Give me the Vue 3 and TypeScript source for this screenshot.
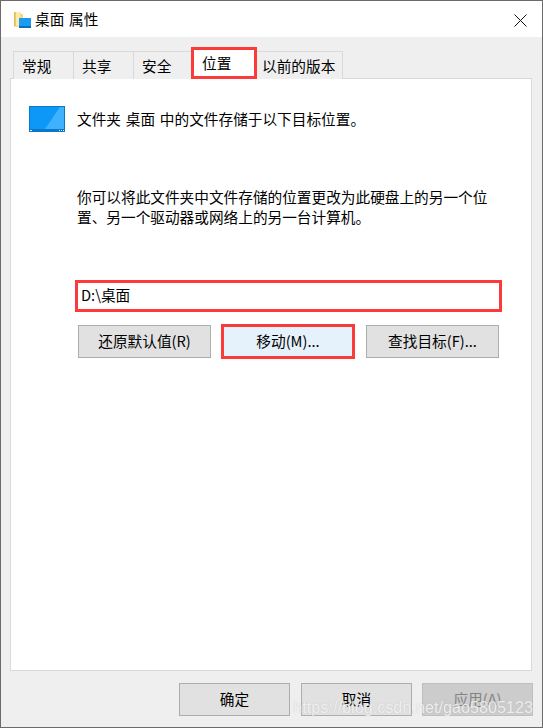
<script setup lang="ts">
const tabs = [
  { label: '常规', width: 60, active: false },
  { label: '共享', width: 60, active: false },
  { label: '安全', width: 59, active: false },
  { label: '位置', width: 66, active: true },
  { label: '以前的版本', width: 87, active: false },
]
</script>

<template>
  <div class="win">
    <header class="title">
      <svg class="folder" width="18" height="18" viewBox="0 0 18 18">
        <path d="M1 1h6l1 2h2v13H3l-2-1z" fill="#f5d77e" />
        <path d="M3 1h4v14H3z" fill="#fce9ac" />
        <path d="M1 1h1.500v14.500L1 15z" fill="#e4bb55" />
        <rect x="6" y="7" width="12" height="10" fill="#1e9bee" />
        <rect x="6" y="15" width="12" height="2" fill="#0a6fb5" />
      </svg>
      <span class="title-text">桌面 属性</span>
      <svg class="close" width="13" height="13" viewBox="0 0 13 13">
        <path d="M.5.500l12 12M12.500.500l-12 12" stroke="#111" stroke-width="1" fill="none" />
      </svg>
    </header>

    <nav class="tabs">
      <div
        v-for="tab in tabs"
        :key="tab.label"
        class="tab"
        :class="{ active: tab.active }"
        :style="{ width: tab.width + 'px' }"
      >
        {{ tab.label }}
      </div>
    </nav>

    <main class="panel">
      <div class="head">
        <svg class="monitor" width="36" height="26" viewBox="0 0 36 26">
          <rect width="36" height="26" fill="#0a78c6" />
          <rect x="1" y="1" width="34" height="22" fill="#0d98f8" />
          <path d="M16 23L31 1h4v22z" fill="#3fb2fd" />
          <rect x="1" y="24" width="2" height="1" fill="#e8f6ff" />
          <rect x="30" y="24" width="1" height="1" fill="#e8f6ff" />
          <rect x="32" y="24" width="1" height="1" fill="#e8f6ff" />
          <rect x="34" y="24" width="1" height="1" fill="#e8f6ff" />
        </svg>
        <span>文件夹 桌面 中的文件存储于以下目标位置。</span>
      </div>

      <p class="desc">你可以将此文件夹中文件存储的位置更改为此硬盘上的另一个位置、另一个驱动器或网络上的另一台计算机。</p>

      <div class="path">D:\桌面</div>

      <div class="actions">
        <button class="btn wide">还原默认值(R)</button>
        <button class="btn move">移动(M)...</button>
        <button class="btn wide last">查找目标(F)...</button>
      </div>
    </main>

    <footer class="foot">
      <button class="btn dlg">确定</button>
      <button class="btn dlg">取消</button>
      <button class="btn dlg off">应用(A)</button>
      <span class="mark">https://blog.csdn.net/gao5805123</span>
    </footer>
  </div>
</template>

<style>
html, body { margin: 0; padding: 0; background: #efefef; }
</style>

<style scoped>
.win {
  position: relative;
  width: 543px;
  height: 728px;
  box-sizing: border-box;
  border: 1px solid #6b6b6b;
  background: #efefef;
  font-family: "Noto Sans CJK SC", "Noto Sans", sans-serif;
  font-size: 14.67px;
  word-spacing: 1.5px;
  color: #000;
  display: flex;
  flex-direction: column;
  overflow: hidden;
}
.title {
  height: 36px;
  background: #fff;
  display: flex;
  align-items: center;
  padding: 0 15px 0 12px;
  flex: none;
}
.folder { flex: none; margin-top: 2px; }
.title-text { margin-left: 4px; line-height: 20px; margin-top: -1px; }
.close { margin-left: auto; margin-top: 2px; }

.tabs {
  display: flex;
  height: 27px;
  margin: 14px 0 0 12px;
  flex: none;
  position: relative;
  z-index: 1;
}
.tab {
  box-sizing: border-box;
  height: 28px;
  border: 1px solid #d9d9d9;
  border-bottom: none;
  border-right: none;
  background: #efefef;
  padding-left: 8px;
  line-height: 28px;
  white-space: nowrap;
}
.tab:nth-child(5) { border-right: 1px solid #d9d9d9; padding-left: 5px; }
.tab.active {
  height: 32px;
  margin: -4px -1px 0 -1px;
  border: 3px solid #fb3a3a;
  background: #fff;
  padding-left: 8px;
  line-height: 25px;
  position: relative;
  z-index: 2;
}
.panel {
  box-sizing: border-box;
  height: 593px;
  margin-left: 9px;
  width: 522px;
  background: #fff;
  border: 1px solid #d9d9d9;
  padding: 27px 0 0 18px;
  display: flex;
  flex-direction: column;
  flex: none;
}
.head {
  display: flex;
  align-items: center;
  gap: 12px;
  line-height: 26px;
}
.monitor { flex: none; }
.desc {
  margin: 55px 0 0 48px;
  width: 432px;
  height: 40px;
  line-height: 20px;
}
.path {
  box-sizing: border-box;
  width: 427px;
  height: 32px;
  margin: 53px 0 0 46px;
  border: 3px solid #fb3a3a;
  padding-left: 3px;
  line-height: 23px;
  background: #fff;
}
.actions {
  display: flex;
  align-items: center;
  gap: 10px;
  margin: 12px 0 0 49px;
}
.btn {
  box-sizing: border-box;
  border: 1px solid #adadad;
  background: #e1e1e1;
  font: inherit;
  color: #000;
  padding: 0 0 2px;
  height: 33px;
  line-height: 28px;
}
.wide { width: 133px; }
.last { margin-left: 1px; }
.move {
  width: 134px;
  height: 35px;
  border: 3px solid #fb3a3a;
  background: #e5f1fb;
}
.foot {
  display: flex;
  gap: 11px;
  margin: 12px 0 0 178px;
  position: relative;
}
.dlg { width: 111px; }
.off {
  background: #ccc;
  border-color: #bfbfbf;
  color: #838383;
  margin-left: -1px;
}
.mark {
  position: absolute;
  right: 9px;
  top: 16px;
  font-family: "Liberation Sans", Arial, sans-serif;
  font-size: 16px;
  line-height: 18px;
  white-space: nowrap;
  color: rgba(255, 255, 255, .8);
  text-shadow: 0 0 1px rgba(150, 150, 150, .6);
  letter-spacing: .1px;
}
</style>
